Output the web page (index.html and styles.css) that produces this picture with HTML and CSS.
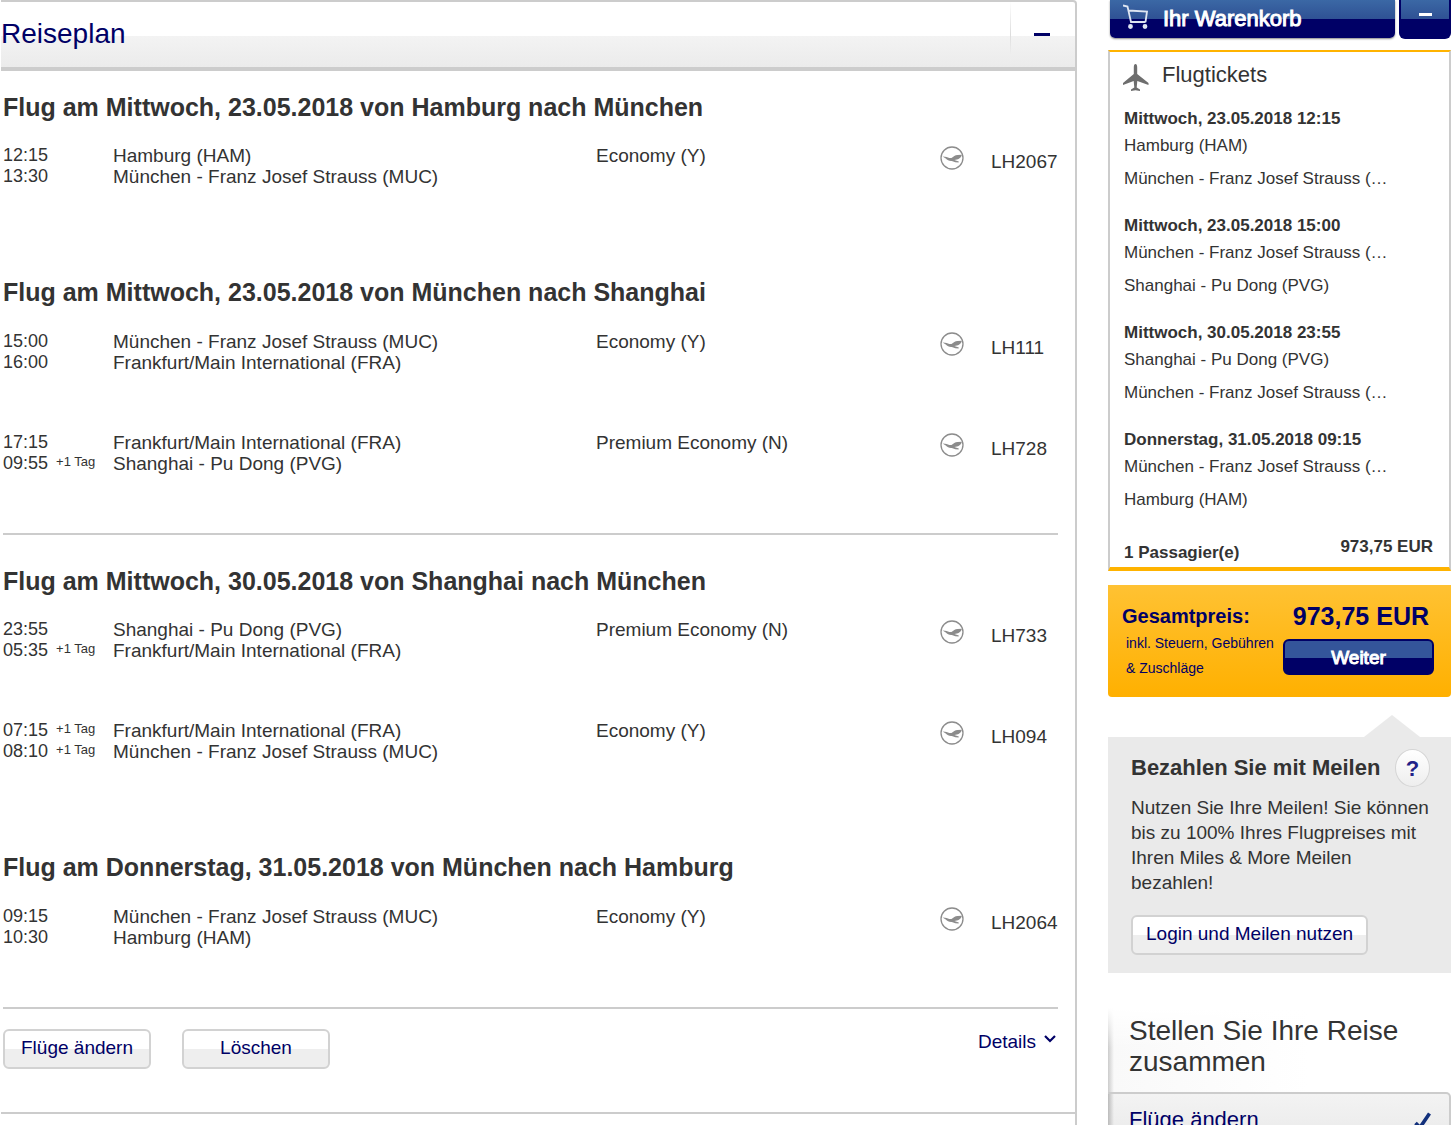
FILE: index.html
```html
<!DOCTYPE html>
<html lang="de">
<head>
<meta charset="utf-8">
<title>Reiseplan</title>
<link rel="stylesheet" href="styles.css">
</head>
<body>
<svg class="defs" aria-hidden="true">
  <symbol id="crane" viewBox="0 0 24 24">
    <circle cx="12" cy="12" r="11" fill="#fff" stroke="#8c8c8c" stroke-width="1.3"/>
    <path d="M2.500 10.500l2.500.3c2.500.3 4.500 1.700 6.500 1.200C13.500 10.500 15 9 17.500 8.900L21.800 8.800c-.2 1.500-1 2.600-2 3.200-1 1-2.500 1.500-4 1.700l-1.500.4 4.500 1.400-.2 1-3.300-.3-3.500-1.300c-2.500.3-4.500-.9-6-2.400z" fill="#8c8c8c"/>
  </symbol>
</svg>
<div class="page">
  <main class="main">
    <section class="card">
      <header class="card-head">
        <h1>Reiseplan</h1>
        <button class="toggle" aria-label="Reiseplan einklappen"><span class="minus"></span></button>
      </header>
      <div class="card-body">
        <section class="flight">
          <h2>Flug am Mittwoch, 23.05.2018 von Hamburg nach München</h2>
          <table class="legs">
            <tr>
              <td class="time">12:15<br>13:30</td>
              <td class="place">Hamburg (HAM)<br>München - Franz Josef Strauss (MUC)</td>
              <td class="class">Economy (Y)</td>
              <td class="logo"><svg width="24" height="24"><use href="#crane"/></svg></td>
              <td class="number">LH2067</td>
            </tr>
          </table>
        </section>
        <section class="flight ruled">
          <h2>Flug am Mittwoch, 23.05.2018 von München nach Shanghai</h2>
          <table class="legs">
            <tr>
              <td class="time">15:00<br>16:00</td>
              <td class="place">München - Franz Josef Strauss (MUC)<br>Frankfurt/Main International (FRA)</td>
              <td class="class">Economy (Y)</td>
              <td class="logo"><svg width="24" height="24"><use href="#crane"/></svg></td>
              <td class="number">LH111</td>
            </tr>
            <tr>
              <td class="time">17:15<br>09:55 <small>+1 Tag</small></td>
              <td class="place">Frankfurt/Main International (FRA)<br>Shanghai - Pu Dong (PVG)</td>
              <td class="class">Premium Economy (N)</td>
              <td class="logo"><svg width="24" height="24"><use href="#crane"/></svg></td>
              <td class="number">LH728</td>
            </tr>
          </table>
        </section>
        <section class="flight">
          <h2>Flug am Mittwoch, 30.05.2018 von Shanghai nach München</h2>
          <table class="legs">
            <tr>
              <td class="time">23:55<br>05:35 <small>+1 Tag</small></td>
              <td class="place">Shanghai - Pu Dong (PVG)<br>Frankfurt/Main International (FRA)</td>
              <td class="class">Premium Economy (N)</td>
              <td class="logo"><svg width="24" height="24"><use href="#crane"/></svg></td>
              <td class="number">LH733</td>
            </tr>
            <tr>
              <td class="time">07:15 <small>+1 Tag</small><br>08:10 <small>+1 Tag</small></td>
              <td class="place">Frankfurt/Main International (FRA)<br>München - Franz Josef Strauss (MUC)</td>
              <td class="class">Economy (Y)</td>
              <td class="logo"><svg width="24" height="24"><use href="#crane"/></svg></td>
              <td class="number">LH094</td>
            </tr>
          </table>
        </section>
        <section class="flight ruled">
          <h2>Flug am Donnerstag, 31.05.2018 von München nach Hamburg</h2>
          <table class="legs">
            <tr>
              <td class="time">09:15<br>10:30</td>
              <td class="place">München - Franz Josef Strauss (MUC)<br>Hamburg (HAM)</td>
              <td class="class">Economy (Y)</td>
              <td class="logo"><svg width="24" height="24"><use href="#crane"/></svg></td>
              <td class="number">LH2064</td>
            </tr>
          </table>
        </section>
        <footer class="actions">
          <button class="btn">Flüge ändern</button>
          <button class="btn">Löschen</button>
          <a class="details" href="#details">Details
            <svg width="12" height="8" viewBox="0 0 12 8"><path d="M1 1l5 5 5-5" fill="none" stroke="#000066" stroke-width="2.200"/></svg>
          </a>
        </footer>
      </div>
    </section>
    <section class="card next"></section>
  </main>

  <aside class="side">
    <div class="cart-head">
      <button class="cart-title">
        <svg width="26" height="26" viewBox="0 0 26 26" fill="none" stroke="#dfe6f2" stroke-width="1.800"><path d="M0 1.500l4.500 1 3.500 15.500h14.500M5.500 6.500l18.500 1-1.500 10.500"/><circle cx="7.500" cy="22.500" r="1.500" fill="#dfe6f2"/><circle cx="22" cy="22.500" r="1.500" fill="#dfe6f2"/></svg>
        Ihr Warenkorb
      </button>
      <button class="cart-toggle" aria-label="Warenkorb einklappen"><span class="minus light"></span></button>
    </div>

    <section class="cart">
      <h3>
        <svg width="26" height="27" viewBox="0 0 26 27"><path d="M12.500 0c1.200 0 1.700 1.500 1.700 3.500v6.500L25.500 19v2l-11.200-4-.6 6.500 3.300 2v1.500l-4.500-.8-4.500.8v-1.500l3.300-2-.6-6.500L0 21v-2l10.800-9V3.500C10.800 1.500 11.300 0 12.500 0z" fill="#6e6e6e"/></svg>
        Flugtickets
      </h3>
      <dl class="tickets">
        <dt>Mittwoch, 23.05.2018 12:15</dt>
        <dd>Hamburg (HAM)</dd>
        <dd>München - Franz Josef Strauss (…</dd>
        <dt>Mittwoch, 23.05.2018 15:00</dt>
        <dd>München - Franz Josef Strauss (…</dd>
        <dd>Shanghai - Pu Dong (PVG)</dd>
        <dt>Mittwoch, 30.05.2018 23:55</dt>
        <dd>Shanghai - Pu Dong (PVG)</dd>
        <dd>München - Franz Josef Strauss (…</dd>
        <dt>Donnerstag, 31.05.2018 09:15</dt>
        <dd>München - Franz Josef Strauss (…</dd>
        <dd>Hamburg (HAM)</dd>
      </dl>
      <div class="passengers"><span>1 Passagier(e)</span><span class="price">973,75 EUR</span></div>
    </section>

    <section class="total">
      <div class="total-text">
        <h3>Gesamtpreis:</h3>
        <p>inkl. Steuern, Gebühren<br>&amp; Zuschläge</p>
      </div>
      <div class="total-pay">
        <strong>973,75 EUR</strong>
        <button class="primary">Weiter</button>
      </div>
    </section>

    <section class="miles">
      <div class="miles-head">
        <h3>Bezahlen Sie mit Meilen</h3>
        <button class="help" aria-label="Hilfe">?</button>
      </div>
      <p>Nutzen Sie Ihre Meilen! Sie können bis zu 100% Ihres Flugpreises mit Ihren Miles &amp; More Meilen bezahlen!</p>
      <button class="btn">Login und Meilen nutzen</button>
    </section>

    <section class="compose">
      <h2>Stellen Sie Ihre Reise zusammen</h2>
      <a class="step" href="#fluege">Flüge ändern
        <svg width="17" height="20" viewBox="0 0 17 20"><path d="M1.500 11l4.500 4.500L15.500 1.500" fill="none" stroke="#12307c" stroke-width="3.600"/></svg>
      </a>
    </section>
  </aside>
</div>
</body>
</html>
```
FILE: styles.css
```css
* { box-sizing: border-box; }

body {
  margin: 0;
  background: #fff;
  color: #333;
  font: 19px/21px "Liberation Sans", Arial, sans-serif;
}

h1, h2, h3, p, dl, dd { margin: 0; }

button { font: inherit; cursor: pointer; }

a { color: #000066; text-decoration: none; }

svg { display: block; }

.defs { display: none; }

.page {
  display: grid;
  grid-template-columns: minmax(0, 1fr) 343px;
  column-gap: 31px;
  height: 100vh;
  padding-right: 5px;
  overflow: hidden;
}

/* Itinerary */
.card { margin-left: 1px; }

.card-head {
  display: flex;
  height: 71px;
  border: 2px solid #ccc;
  border-left: 0;
  border-bottom-width: 4px;
  border-radius: 0 4px 0 0;
  background: linear-gradient(#fff 34px, #f3f3f3 34px, #ebebeb);
}

.card-head h1 {
  flex: 1;
  color: #000066;
  font-size: 28px;
  font-weight: 400;
  line-height: 64px;
}

.toggle {
  width: 65px;
  padding: 0 2px 0 0;
  border: 0;
  border-left: 1px solid;
  border-image: linear-gradient(#fff, #ddd 50%, #eee 80%, transparent) 1;
  background: none;
}

.minus {
  display: block;
  width: 16px;
  height: 3px;
  margin: 0 auto;
  background: #000066;
}

.card-body {
  padding: 21px 17px 0 2px;
  border: solid #ccc;
  border-width: 0 2px 2px 0;
}

.flight { margin-bottom: 31px; }

.flight h2 {
  margin-bottom: 23px;
  font-size: 25px;
  line-height: 30px;
}

.ruled { border-bottom: 2px solid #ccc; }
.ruled h2 { margin-bottom: 24px; }

.legs {
  width: 100%;
  table-layout: fixed;
  border-collapse: collapse;
}

.legs td {
  height: 101px;
  padding: 0;
  vertical-align: top;
  white-space: nowrap;
}

.time { width: 110px; font-size: 18px; }
.class { width: 344px; }
.logo { width: 51px; }
.number { width: 67px; }
.legs .number { padding-top: 6px; }
.legs .logo { padding-top: 1px; }

.time small {
  padding-left: 3px;
  font-size: 13px;
  line-height: 14px;
  vertical-align: 3px;
}

.btn {
  padding: 0 13px 3px;
  height: 40px;
  border: 2px solid #d2d2d2;
  border-radius: 6px;
  background: linear-gradient(#fff 50%, #eee 50%);
  color: #000066;
}

.actions {
  display: flex;
  gap: 31px;
  margin-top: -11px;
  padding-bottom: 43px;
}

.actions .btn { width: 148px; padding: 0 0 3px; }

.details {
  display: flex;
  gap: 8px;
  margin: 2px 2px 0 auto;
}

.details svg { margin-top: 4px; }

.next {
  height: 40px;
  border-right: 2px solid #ccc;
}

/* Shopping cart */
.cart-head {
  display: flex;
  align-items: flex-start;
  gap: 4px;
  padding-left: 2px;
}

.cart-title {
  display: flex;
  flex: 1;
  gap: 14px;
  height: 38px;
  padding: 4px 13px;
  border: 0;
  border-radius: 0 0 5px 5px;
  background: linear-gradient(#3b68a5, #2f5194 19px, #000066 19px);
  box-shadow: 0 1px 2px #888;
  color: #fff;
  font-size: 22px;
  line-height: 30px;
  -webkit-text-stroke: 1px #fff;
}

.cart-toggle {
  width: 52px;
  height: 39px;
  padding: 0 0 8px;
  border: 2px solid #000066;
  border-top: 0;
  border-radius: 0 0 6px 6px;
  background: linear-gradient(#3b68a5, #2f5194 19px, #000066 19px);
}

.light { width: 13px; background: #fff; }

.cart {
  margin-top: 11px;
  padding: 9px 16px 2px 14px;
  border: 2px solid #ccc;
  border-top-color: #ffb300;
  border-bottom: 4px solid #ffb300;
}

.cart h3 {
  display: flex;
  gap: 13px;
  font-size: 22px;
  font-weight: 400;
  line-height: 28px;
}

.cart svg { margin-top: 3px; margin-left: -1px; }

.tickets {
  margin-top: 16px;
  font-size: 17px;
  line-height: 24px;
}

.tickets dt { font-weight: 700; }
.tickets dd { margin-top: 3px; }
.tickets dd + dd { margin-top: 9px; }
.tickets dd + dt { margin-top: 23px; }

.passengers {
  display: flex;
  justify-content: space-between;
  margin-top: 23px;
  font-size: 17px;
  font-weight: 700;
  line-height: 24px;
}

.price { padding-bottom: 6px; }
.passengers span:first-child { padding-top: 6px; }

.total {
  display: flex;
  justify-content: space-between;
  height: 112px;
  margin-top: 14px;
  padding: 16px 17px 0 14px;
  border-radius: 0 0 4px 4px;
  background: linear-gradient(#ffc233, #ffb000);
  color: #000066;
}

.total h3 { font-size: 20px; line-height: 30px; }

.total p {
  padding-left: 4px;
  font-size: 14px;
  line-height: 25px;
  white-space: nowrap;
}

.total-pay { text-align: right; }

.total-pay strong {
  display: block;
  padding-right: 5px;
  font-size: 25px;
  line-height: 30px;
}

.primary {
  width: 151px;
  height: 36px;
  margin-top: 8px;
  border: 2px solid #000066;
  border-radius: 6px;
  background: linear-gradient(#34559a 17px, #000066 17px);
  color: #fff;
  -webkit-text-stroke: 1px #fff;
}

.miles {
  position: relative;
  margin-top: 40px;
  padding: 12px 21px 18px 23px;
  background: #eaeaea;
}

.miles::before {
  content: "";
  position: absolute;
  right: 31px;
  bottom: 100%;
  border: solid transparent;
  border-width: 0 28px 22px;
  border-bottom-color: #eaeaea;
}

.miles-head {
  display: flex;
  align-items: center;
  justify-content: space-between;
  margin-bottom: 8px;
}

.miles h3 { font-size: 22px; line-height: 38px; white-space: nowrap; }

.miles p { line-height: 25px; }

.help {
  width: 35px;
  height: 38px;
  padding: 0;
  border: 1px solid #d5d5d5;
  border-radius: 50%;
  background: linear-gradient(#fff, #eee);
  color: #222288;
  font-size: 22px;
  font-weight: 700;
}

.miles .btn { margin-top: 20px; }

.compose {
  margin-top: 35px;
  background: linear-gradient(#fff, transparent 40px), linear-gradient(90deg, #ccc, #f9f9f9 6px, #fff 200px);
}

.compose h2 {
  padding: 7px 21px 15px;
  font-size: 28px;
  font-weight: 400;
  line-height: 31px;
}

.step {
  display: flex;
  justify-content: space-between;
  height: 60px;
  padding: 14px 18px 0 21px;
  border: 2px solid #ccc;
  border-left: 0;
  border-radius: 0 5px 0 0;
  background: linear-gradient(90deg, #bbb, transparent 6px), linear-gradient(#f3f3f3, #e8e8e8);
  font-size: 22px;
  line-height: 24px;
}

.step svg { margin-top: 4px; }
```
